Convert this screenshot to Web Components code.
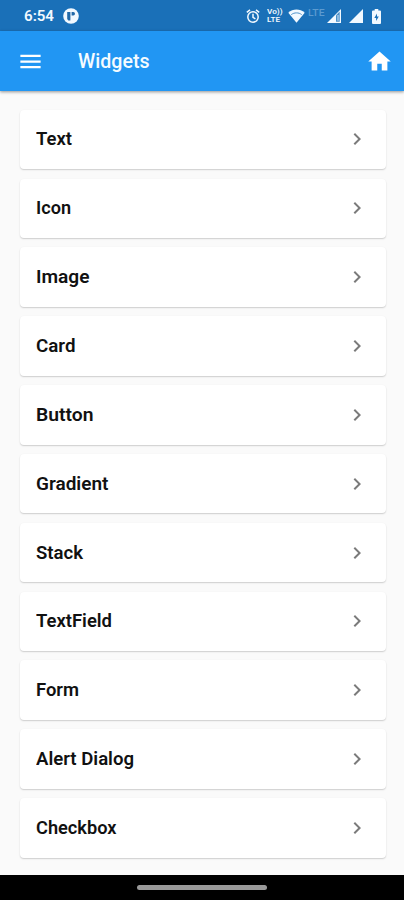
<!DOCTYPE html>
<html lang="en">
<head>
<meta charset="utf-8">
<meta name="viewport" content="width=device-width">
<title>Widgets</title>
<style>
  html, body { margin: 0; height: 100%; }
  body { font-family: Roboto, "Noto Sans", sans-serif; background: #fafafa; overflow: hidden; }
</style>
</head>
<body>
<widget-screen></widget-screen>
<script>
const define = (name, html, setup) => customElements.define(name, class extends HTMLElement {
  connectedCallback() {
    if (this.shadowRoot) return;
    const t = document.createElement('template');
    t.innerHTML = html;
    this.attachShadow({ mode: 'open' }).append(t.content.cloneNode(true));
    if (setup) setup(this, this.shadowRoot);
  }
});

// A label condensed or widened so that its advance equals the "width" attribute.
define('fit-label', `
  <style>
    :host { display: block; white-space: nowrap; line-height: 24px; }
    span { display: inline-block; transform-origin: 0 50%; }
  </style><span></span>`, (host, root) => {
  const s = root.querySelector('span');
  s.textContent = host.getAttribute('text');
  s.style.transform = `scaleX(${Number(host.getAttribute('width')) / s.getBoundingClientRect().width})`;
});

define('status-bar', `
  <style>
    :host { display: flex; box-sizing: border-box; height: 31px; background: #1a70b8; color: #f2f9ff;
      padding: 1px 23px 0 24px; align-items: center; }
    fit-label { font-size: 15px; font-weight: 600; width: 30px; }
    svg { display: block; fill: currentColor; flex: none; }
    .app { margin-left: 9px; }
    .right { margin-left: auto; display: flex; align-items: center; }
    .volte { display: grid; margin-left: 7px; width: 16px; }
    .volte fit-label { font-size: 6.5px; line-height: 8px; width: 16px; font-weight: 600; }
    .wifi { margin-left: 5px; }
    .lte { font-size: 9px; width: 17px; margin: -7px 0 0 3px; color: #5c9bd0; font-weight: 500; }
    .s1 { margin-left: 2px; } .s2 { margin-left: 8px; } .bat { margin-left: 9px; }
  </style>
  <fit-label text="6:54" width="30"></fit-label>
  <svg class="app" width="16" height="16" viewBox="0 0 16 16"><circle cx="8" cy="8" r="7.8"/><path d="M4.200 4h3.200v8.500H5.400q-1.200-1-1.200-2z" fill="#2269a8"/><path d="M8.600 4h1.700a1.700 1.700 0 0 1 0 3.400H8.600z" fill="#2269a8"/></svg>
  <div class="right">
    <svg width="14" height="15" viewBox="0 0 14 15" style="fill:none" stroke="currentColor" stroke-width="1.500"><circle cx="7" cy="8" r="5.200"/><path d="M.8 3.400 4 .9M13.200 3.400 10 .9M7 4.800v3.500l2.400 1.500"/></svg>
    <div class="volte"><fit-label text="Vo))" width="15.500"></fit-label><fit-label text="LTE" width="13"></fit-label></div>
    <svg class="wifi" width="17" height="14" viewBox="0 0 17 14"><path d="M.3 3.800C4.900-.5 12.100-.5 16.700 3.800L8.500 13.700z"/><path d="M3.300 5.600C6.300 3.300 10.700 3.300 13.700 5.600" fill="none" stroke="#4c91c9" stroke-width="1"/></svg>
    <fit-label class="lte" text="LTE" width="16.500"></fit-label>
    <svg class="s1" width="14" height="14" viewBox="0 0 14 14"><path d="M14 0v14H0z"/><path d="M9 6.200 12.700 2.500v10.200H9z" fill="#4a8fc8"/><path d="M11 6v5.800" stroke="#cfe4f5" stroke-width="1"/></svg>
    <svg class="s2" width="14" height="14" viewBox="0 0 14 14"><path d="M14 0v14H0z"/></svg>
    <svg class="bat" width="9" height="15" viewBox="0 0 9 15"><path d="M2.700 0h3.600v1.500H8q1 0 1 1V14q0 1-1 1H1q-1 0-1-1V2.500q0-1 1-1h1.700z"/><path d="M5 4.500v3h1.800L4.100 12V9H2.300z" fill="#1a70b8"/></svg>
  </div>`);

define('app-bar', `
  <style>
    :host { display: flex; box-sizing: border-box; height: 60px; align-items: center; padding: 0 11.500px 0 17px;
      background: #2196f3; color: #fff; box-shadow: 0 1px 3px rgba(0,0,0,.42); position: relative; }
    svg { display: block; fill: #fff; width: 27px; height: 27px; }
    fit-label { margin: -1px 0 0 34px; font-size: 20px; font-weight: 500; flex: 1; color: #f5fbff; }
  </style>
  <svg viewBox="0 0 24 24"><path d="M3 18h18v-2H3v2zm0-5h18v-2H3v2zm0-7v2h18V6H3z"/></svg>
  <fit-label text="Widgets" width="71.500"></fit-label>
  <svg viewBox="0 0 24 24"><path d="M10 20v-6h4v6h5v-8h3L12 3 2 12h3v8z"/></svg>`);

define('widget-row', `
  <style>
    :host { display: flex; box-sizing: border-box; height: 59.500px; align-items: center; justify-content: space-between;
      padding: 0 17.500px 0 16px; background: #fff; border-radius: 4px; color: #111;
      box-shadow: 0 1px 1.500px rgba(0,0,0,.18), 0 0 2px rgba(0,0,0,.02); font-size: 18px; font-weight: 600; }
    svg { display: block; width: 24px; height: 24px; fill: #7b7b7b; }
  </style>
  <slot></slot>
  <svg viewBox="0 0 24 24"><path d="M10 6 8.590 7.410 13.170 12l-4.580 4.590L10 18l6-6z"/></svg>`);

define('nav-bar', `
  <style>
    :host { display: grid; place-items: center; height: 25px; background: #000; }
    i { width: 130px; height: 5px; border-radius: 3px; background: #999; }
  </style><i></i>`);

const rows = [['Text', 36], ['Icon', 35], ['Image', 53.5], ['Card', 39.5], ['Button', 57.5], ['Gradient', 72.5],
  ['Stack', 47], ['TextField', 76], ['Form', 43], ['Alert Dialog', 98], ['Checkbox', 80.5]];

define('widget-screen', `
  <style>
    :host { display: flex; flex-direction: column; height: 900px; width: 404px; }
    main { flex: 1; display: flex; flex-direction: column; gap: 9.350px; padding: 18.700px 18px 0 20px; min-height: 0; }
  </style>
  <status-bar></status-bar>
  <app-bar></app-bar>
  <main>${rows.map(([t, w]) => `<widget-row><fit-label text="${t}" width="${w}"></fit-label></widget-row>`).join('')}</main>
  <nav-bar></nav-bar>`);
</script>
</body>
</html>
